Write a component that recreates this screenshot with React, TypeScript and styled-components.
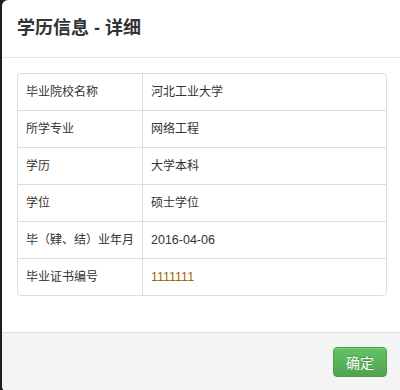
import { Fragment } from "react";
import { createGlobalStyle, styled } from "styled-components";

const GlobalStyle = createGlobalStyle`
  html, body {
    margin: 0;
    padding: 0;
    background: #1e1e1e;
    overflow: hidden;
  }
  body {
    font-family: "Liberation Sans", "Noto Sans CJK SC", sans-serif;
    color: #333;
  }
`

const Backdrop = styled.div`
  width: 400px;
  height: 390px;
  display: flex;
  padding-left: 2px;
  box-sizing: border-box;
`

const Modal = styled.div`
  flex: 0 0 400px;
  height: 392px;
  background: #fff;
  border-radius: 6px 0 0 6px;
  overflow: hidden;
  display: flex;
  flex-direction: column;
`

const Header = styled.div`
  padding: 15px;
  border-bottom: 1px solid #e5e5e5;
`

const Title = styled.h4`
  margin: 0;
  font-size: 18px;
  line-height: 27px;
  font-weight: 700;
  color: #333;
  font-family: "Liberation Sans", "Noto Sans CJK SC", sans-serif;
`

const Body = styled.div`
  padding: 15px 15px 36px;
`

const InfoTable = styled.div`
  display: grid;
  grid-template-columns: 125px 1fr;
  border: 1px solid #ddd;
  border-radius: 4px;
  overflow: hidden;
`

const Cell = styled.div<{ $first?: boolean; $last?: boolean }>`
  padding: 8px;
  font-size: 12px;
  line-height: 20px;
  white-space: nowrap;
  border-top: ${({ $first }) => ($first ? "none" : "1px solid #ddd")};
  border-right: ${({ $last }) => ($last ? "none" : "1px solid #ddd")};
`

const Value = styled.span<{ $tone?: "num" | "code" }>`
  color: ${({ $tone }) => ($tone === "code" ? "#a0670a" : "#333")};
  font-size: ${({ $tone }) => ($tone ? "12.5px" : "12px")};
`

const Footer = styled.div`
  flex: 1;
  background: #f4f4f4;
  border-top: 1px solid #ddd;
  padding: 14px 15px;
  display: flex;
  justify-content: flex-end;
  align-items: flex-start;
`

const OkButton = styled.button`
  font-family: "Noto Sans CJK SC", sans-serif;
  font-size: 14px;
  line-height: 20px;
  padding: 4px 12px;
  color: #fff;
  border: 1px solid #4b9c4b;
  border-radius: 4px;
  background: linear-gradient(to bottom, #62c462, #51a351);
  box-shadow: inset 0 1px 0 rgba(255, 255, 255, 0.2);
  text-shadow: 0 -1px 0 rgba(0, 0, 0, 0.2);
  cursor: pointer;
`

const rows: { label: string; value: string; tone?: "num" | "code" }[] = [
  { label: "毕业院校名称", value: "河北工业大学" },
  { label: "所学专业", value: "网络工程" },
  { label: "学历", value: "大学本科" },
  { label: "学位", value: "硕士学位" },
  { label: "毕（肄、结）业年月", value: "2016-04-06", tone: "num" },
  { label: "毕业证书编号", value: "1111111", tone: "code" },
]

export default function App() {
  return (
    <>
      <GlobalStyle />
      <Backdrop>
        <Modal>
          <Header>
            <Title>学历信息 - 详细</Title>
          </Header>
          <Body>
            <InfoTable>
              {rows.map((r, i) => (
                <Fragment key={r.label}>
                  <Cell $first={i === 0}>{r.label}</Cell>
                  <Cell $first={i === 0} $last>
                    <Value $tone={r.tone}>{r.value}</Value>
                  </Cell>
                </Fragment>
              ))}
            </InfoTable>
          </Body>
          <Footer>
            <OkButton>确定</OkButton>
          </Footer>
        </Modal>
      </Backdrop>
    </>
  );
}
